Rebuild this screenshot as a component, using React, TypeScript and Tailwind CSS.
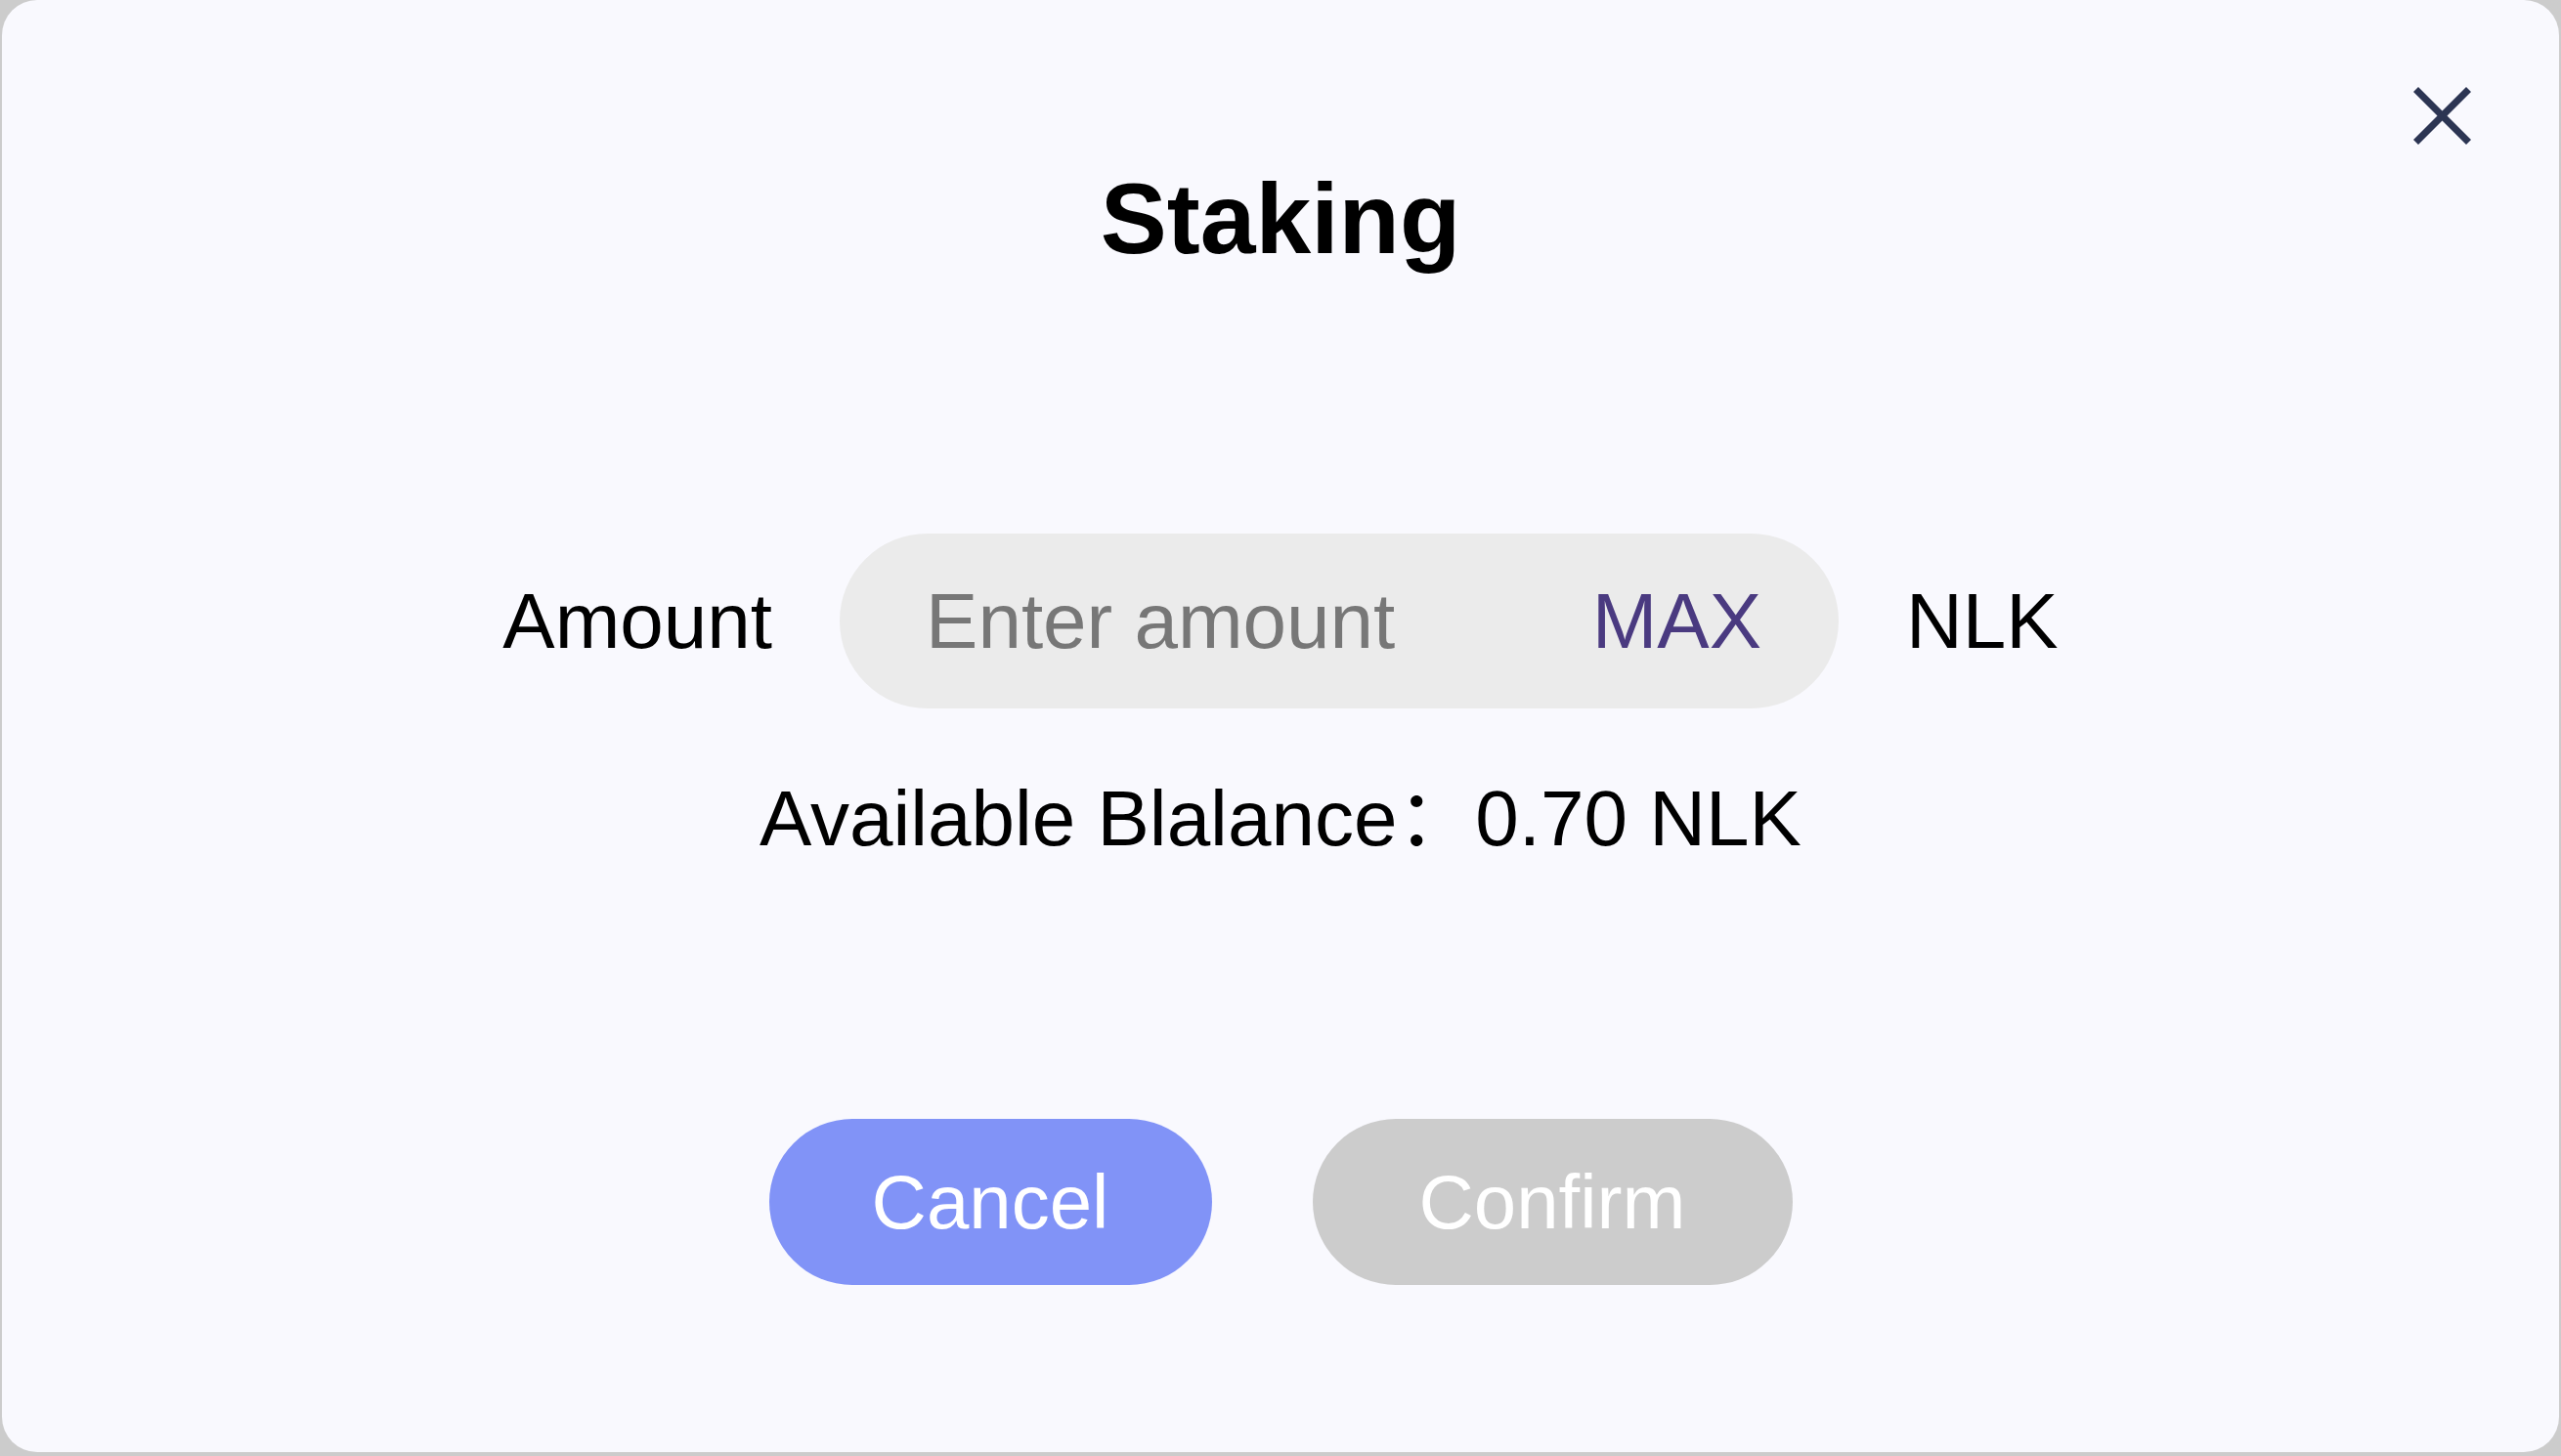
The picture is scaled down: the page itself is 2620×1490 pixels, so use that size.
import { useState } from "react";

const CloseIcon = () => (
  <svg width="59" height="59" viewBox="0 0 59 59" fill="none">
    <line x1="2.5" y1="2.5" x2="56.5" y2="56.5" stroke="#2c3553" strokeWidth="7" />
    <line x1="56.5" y1="2.5" x2="2.5" y2="56.5" stroke="#2c3553" strokeWidth="7" />
  </svg>
);

const App = () => {
  const [amount, setAmount] = useState<string>("");

  const handleMax = () => {
    setAmount("0.70");
  };

  return (
    <div className="h-[1490px] w-full bg-[#cccccc] px-[2px] font-['Liberation_Sans','Noto_Sans_CJK_SC',sans-serif]">
      <div className="relative flex h-[1486px] w-full flex-col items-center rounded-[36px] bg-[#f9f9fe] pt-[173px]">
        <button
          className="absolute right-[90px] top-[89px] hover:cursor-pointer"
          type="button"
        >
          <CloseIcon />
        </button>

        <h1 className="text-[102px] font-bold leading-none text-black">Staking</h1>

        <div className="mt-[271px] flex items-center gap-[69px]">
          <span className="text-[80px] leading-none text-black">Amount</span>
          <div className="flex h-[179px] w-[1022px] items-center rounded-full bg-[#ebebeb] pl-[88px] pr-[79px]">
            <input
              className="min-w-0 flex-1 bg-transparent text-[80px] leading-none text-black outline-none placeholder:text-[#777777]"
              onChange={(e) => setAmount(e.target.value)}
              placeholder="Enter amount"
              type="text"
              value={amount}
            />
            <button
              className="text-[80px] leading-none text-[#4a3a80] hover:cursor-pointer"
              onClick={handleMax}
              type="button"
            >
              MAX
            </button>
          </div>
          <span className="text-[80px] leading-none text-black">NLK</span>
        </div>

        <p className="mt-[73px] text-[80px] leading-none text-black">
          Available Blalance：0.70 NLK
        </p>

        <div className="mt-[267px] flex items-center gap-[103px]">
          <button
            className="flex h-[170px] w-[453px] items-center justify-center rounded-full bg-[#8193f7] text-[78px] leading-none text-white hover:cursor-pointer"
            type="button"
          >
            Cancel
          </button>
          <button
            className="flex h-[170px] w-[491px] items-center justify-center rounded-full bg-[#cccccc] text-[78px] leading-none text-white"
            disabled
            type="button"
          >
            Confirm
          </button>
        </div>
      </div>
    </div>
  );
};

export default App;
